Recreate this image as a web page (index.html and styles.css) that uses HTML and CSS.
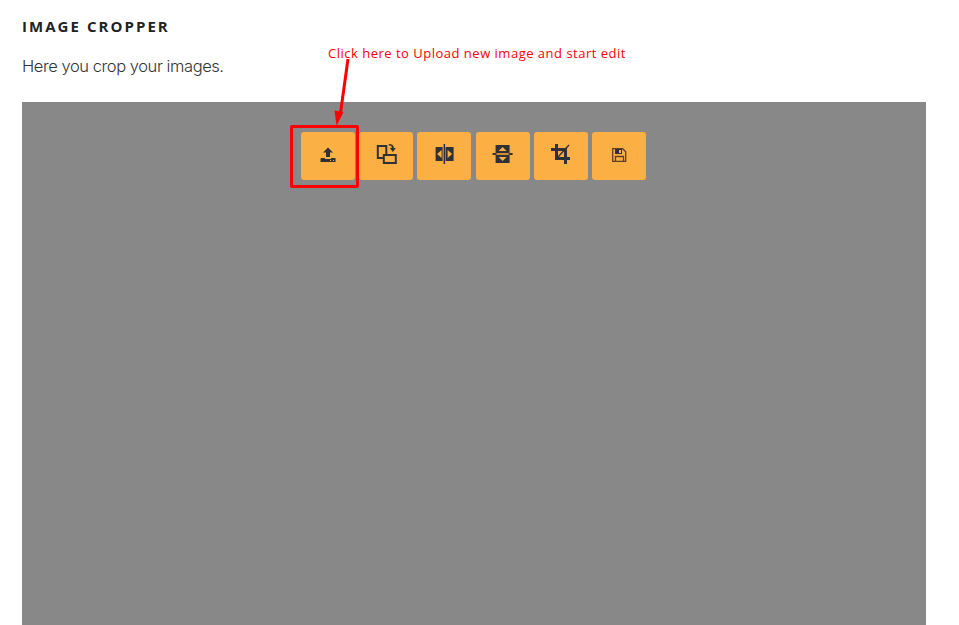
FILE: index.html
```html
<!DOCTYPE html>
<html lang="en">
<head>
<meta charset="utf-8">
<title>Image Cropper</title>
<link rel="stylesheet" href="styles.css">
</head>
<body>
<main class="page">
  <h1 class="title">IMAGE CROPPER</h1>
  <p class="intro">Here you crop your images.</p>
  <section class="cropper">
    <div class="toolbar">
      <button class="tool" aria-label="Upload"><svg viewBox="-2 0 30 30"><path d="M13 7.500l5 5h-3v4.500h-4v-4.500H8z"/><path fill-rule="evenodd" d="M6 18h4v1h6v-1h4.500v4H5.500v-3zM15 20v1h1v-1zM18 20v1h1v-1z"/></svg></button>
      <button class="tool" aria-label="Rotate"><svg viewBox="-0.800 0 30 30"><path class="line" d="M11 18H6V6h8.500v8M12 15h12v8H12z"/><path d="M17 4c3.500 0 5 1.500 5 4h2l-3 4-3-4h2c0-1.800-1-2.400-3-2.400z"/></svg></button>
      <button class="tool" aria-label="Flip horizontally"><svg viewBox="-0.600 0 30 30"><path fill-rule="evenodd" d="M6 7h7v14H6zM12 10l-4.500 4 4.500 4zM16 7h8v14h-8zM18 10v8l4.500-4z"/><path d="M14 4h1.500v20H14z"/></svg></button>
      <button class="tool" aria-label="Flip vertically"><svg viewBox="0.400 0 30 30"><path fill-rule="evenodd" d="M8 5h14v8H8zM15 7l-4 4h8zM8 15h14v8H8zM11 17l4 4 4-4z"/><path d="M5 13h4v2H5zM21 13h4v2h-4z"/><path class="seam" d="M8 13.500h14v1H8z"/></svg></button>
      <button class="tool" aria-label="Crop"><svg viewBox="0 0 30 30"><path d="M9 4h3v13h12v3H9V11.500zM5 8h16v16h-3V11H5z"/><path class="thin" d="M12 17l11-12"/></svg></button>
      <button class="tool" aria-label="Save"><svg viewBox="0 0 30 30"><path class="thin save" d="M8.700 8.700h10l3 3v9.600h-13zM11.500 21v-4.500h8V21"/><path fill-rule="evenodd" d="M11 9h7v5h-7zM15 10v3h2v-3z"/></svg></button>
    </div>
  </section>
  <div class="note">Click here to Upload new image and start edit</div>
  <div class="highlight"></div>
  <svg class="arrow" viewBox="0 0 30 70"><path d="M18 3l-7.500 54" stroke="#f00" stroke-width="3"/><path d="M4.500 54.500l9 1.500L6.500 70z" fill="#f00"/></svg>
</main>
</body>
</html>
```

FILE: styles.css
```css
* { box-sizing: border-box; }
body { margin: 0; background: #fff; overflow: hidden; }
.page {
  position: relative;
  height: 625px;
  padding: 16px 33px 0 22px;
  display: flex;
  flex-direction: column;
  font-family: "Open Sans", "Liberation Sans", sans-serif;
}
.title {
  margin: 0;
  height: 22px;
  font: 700 15px/21px "Open Sans", sans-serif;
  letter-spacing: 2.050px;
  color: #222;
}
.intro {
  margin: 16px 0 24px;
  height: 24px;
  font: 300 16.500px/24px Inter, sans-serif;
  letter-spacing: -0.430px;
  color: #333;
}
.cropper { flex: 1; background: #888; padding-top: 30px; }
.toolbar { display: flex; justify-content: center; gap: 4.200px; margin-right: 1px; }
.tool {
  width: 54px;
  height: 48px;
  padding: 0;
  border: 0;
  border-radius: 3px;
  background: #fcaf43;
  display: flex;
  align-items: flex-start;
  justify-content: center;
}
.tool svg { width: 30px; height: 30px; margin-top: 8px; fill: #303038; }
.tool .line { fill: none; stroke: #303038; stroke-width: 2; }
.tool .thin { fill: none; stroke: #303038; stroke-width: 1.300; }
.tool .save { stroke: #5f3d27; }
.tool .seam { fill: #a66b2b; }
.note {
  position: absolute;
  left: 328px;
  top: 43px;
  font: 400 13px/20px "Open Sans", sans-serif;
  letter-spacing: 0.5px;
  color: #f00;
  white-space: nowrap;
}
.highlight {
  position: absolute;
  left: 290px;
  top: 125px;
  width: 69px;
  height: 63px;
  border: 3px solid #f00;
  border-radius: 2px;
}
.arrow { position: absolute; left: 330px; top: 56px; width: 30px; height: 70px; fill: none; }
```
